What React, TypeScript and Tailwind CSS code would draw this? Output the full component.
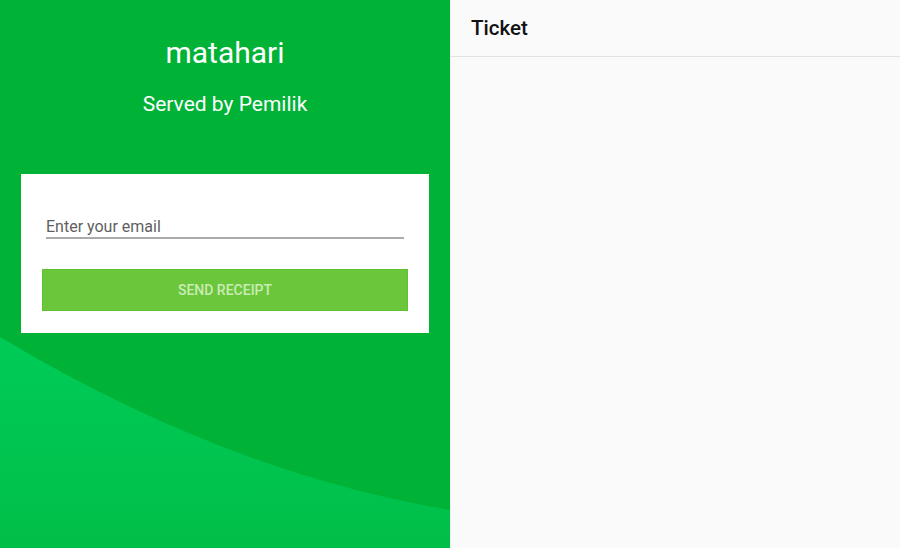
import React from "react";

export default function App() {
  return (
    <div className="flex w-[900px] h-[548px] overflow-hidden" style={{ fontFamily: "Roboto, 'Noto Sans', sans-serif" }}>
      <div className="relative w-[450px] h-full bg-[#00b236] flex flex-col items-center">
        <svg className="absolute left-0 top-0" width="450" height="548" viewBox="0 0 450 548">
          <defs>
            <linearGradient id="g" x1="0" y1="0" x2="0" y2="1">
              <stop offset="0" stopColor="#00cb58" />
              <stop offset="1" stopColor="#00bf48" />
            </linearGradient>
          </defs>
          <path d="M0,337 Q225,472 450,510 L450,548 L0,548 Z" fill="url(#g)" />
        </svg>
        <div className="relative text-white text-[30px] leading-none mt-[38px]">matahari</div>
        <div className="relative text-white text-[21px] leading-none mt-[26px]">Served by Pemilik</div>
        <div className="relative mt-[59px] w-[408px] h-[159px] bg-white px-[21px] pt-[44px]">
          <div className="mx-[4px] border-b-2 border-[#ababab] pb-[1px]">
            <span className="block text-[16px] text-[#5f5f5f] leading-[18px]">Enter your email</span>
          </div>
          <div className="mt-[30px] h-[42px] bg-[#6cc63c] border border-[#5ec22f] flex items-center justify-center text-[14px] font-medium text-[#c9ecb5]">
            SEND RECEIPT
          </div>
        </div>
      </div>
      <div className="w-[450px] h-full bg-[#fafafa] border-l border-[#eeeeee]">
        <div className="h-[57px] border-b border-[#e2e2e2] flex items-center pl-[20px]">
          <span className="text-[20.5px] font-medium text-[#111] mt-[1px]">Ticket</span>
        </div>
      </div>
    </div>
  );
}
